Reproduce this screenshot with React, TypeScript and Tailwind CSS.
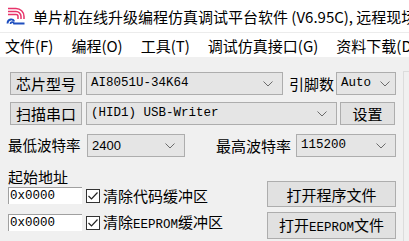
import React from "react";

const cjk = { fontFamily: '"Noto Sans CJK SC", "Microsoft YaHei", sans-serif' };
const mono = { fontFamily: '"Liberation Mono", "Noto Sans CJK SC", monospace' };

function Chevron() {
    return (
        <svg width="10" height="6" viewBox="0 0 10 6" className="shrink-0">
            <path d="M0.5 0.5 L5 5 L9.5 0.5" fill="none" stroke="#6b6b6b" strokeWidth="1" />
        </svg>
    );
}

function Combo({ text, width, font, size = "text-[12.5px]", arrowPad = "pr-[9px]" }: { text: string; width: string; font?: React.CSSProperties; size?: string; arrowPad?: string }) {
    return (
        <div className={`${width} h-[23px] shrink-0 flex items-center justify-between bg-[#e5e5e5] border border-[#adadad] pl-[4px] ${arrowPad}`}>
            <span className={`${size} leading-none text-black whitespace-nowrap`} style={font ?? mono}>{text}</span>
            <Chevron />
        </div>
    );
}

function Button({ children, width, height = "h-[23px]" }: { children: React.ReactNode; width: string; height?: string }) {
    return (
        <div className={`${width} ${height} shrink-0 flex items-center justify-center bg-[#e1e1e1] border border-[#adadad] text-black`}>
            <span className="text-[15px] leading-none whitespace-nowrap" style={cjk}>{children}</span>
        </div>
    );
}

function CheckBox() {
    return (
        <div className="w-[14px] h-[14px] shrink-0 bg-white border border-[#333333] flex items-center justify-center">
            <svg width="12" height="12" viewBox="0 0 12 12">
                <path d="M1.5 6 L4.5 9 L10.5 2.5" fill="none" stroke="#222" strokeWidth="1.2" />
            </svg>
        </div>
    );
}

function Logo() {
    return (
        <svg width="20" height="20" viewBox="0 0 20 20" className="shrink-0">
            <g fill="none" stroke="#e8336a" strokeWidth="1.5">
                <path d="M2 2.5 H10 A8 8 0 0 1 18 10.5 V13" />
                <path d="M2 5.5 H10 A5 5 0 0 1 15 10.5 V13" />
                <path d="M2 8.5 H10 A2 2 0 0 1 12 10.5 V13" />
            </g>
            <g fill="none" stroke="#1f4fbf" strokeWidth="1.8">
                <path d="M1.5 17.5 C1.5 12.5 8 12.5 8 15.5" />
                <path d="M4.5 18 C4.5 15.5 7.5 15.5 8 17.5 H18.5" />
            </g>
        </svg>
    );
}

function AddressInput() {
    return (
        <div className="w-[74px] h-[17px] shrink-0 bg-white border-t border-l border-[#a0a0a0] flex items-center pl-[1px]">
            <span className="text-[12.5px] leading-none text-black" style={mono}>0x0000</span>
        </div>
    );
}

export default function App() {
    const menu = ["文件(F)", "编程(O)", "工具(T)", "调试仿真接口(G)", "资料下载(D)"];

    return (
        <div className="w-[409px] h-[241px] overflow-hidden flex flex-col bg-[#f0f0f0]">
            {/* title bar */}
            <div className="h-[33px] shrink-0 bg-white flex items-center pl-[6px] gap-[7px] border-b border-[#ececec]">
                <Logo />
                <span className="text-[15px] leading-none text-black whitespace-nowrap" style={cjk}>
                    单片机在线升级编程仿真调试平台软件 (V6.95C), 远程现场
                </span>
            </div>

            {/* menu bar */}
            <div className="h-[24px] shrink-0 bg-white flex items-center pl-[5px] gap-[18px]">
                {menu.map((m) => (
                    <span key={m} className="text-[15px] leading-none text-black whitespace-nowrap" style={cjk}>{m}</span>
                ))}
            </div>

            {/* body */}
            <div className="flex-1 flex">
                <div className="flex-1 flex flex-col pl-[8px] pt-[15px]">
                    <div className="flex items-center pl-[2px]">
                        <Button width="w-[72px]">芯片型号</Button>
                        <div className="ml-[4px]"><Combo text="AI8051U-34K64" width="w-[197px]" /></div>
                        <span className="ml-[6px] text-[15px] leading-none text-black" style={cjk}>引脚数</span>
                        <div className="ml-[2px]"><Combo text="Auto" width="w-[60px]" arrowPad="pr-[5px]" /></div>
                    </div>

                    <div className="flex items-center pl-[2px] mt-[7px]">
                        <Button width="w-[72px]">扫描串口</Button>
                        <div className="ml-[4px]"><Combo text="(HID1) USB-Writer" width="w-[251px]" /></div>
                        <div className="ml-[3px]"><Button width="w-[55px]">设置</Button></div>
                    </div>

                    <div className="flex items-center mt-[9px]">
                        <span className="w-[79px] text-[14.5px] leading-none text-black" style={cjk}>最低波特率</span>
                        <Combo text="2400" width="w-[98px]" size="text-[13px]" font={{ fontFamily: '"Liberation Sans", Arial, sans-serif' }} />
                        <span className="ml-[31px] text-[15px] leading-none text-black" style={cjk}>最高波特率</span>
                        <div className="ml-[5px]"><Combo text="115200" width="w-[100px]" /></div>
                    </div>

                    <div className="flex mt-[10px]">
                        <div className="flex flex-col">
                            <span className="h-[19px] text-[15px] leading-[19px] text-black" style={cjk}>起始地址</span>
                            <div className="flex items-center mt-[1px]">
                                <AddressInput />
                                <div className="ml-[4px]"><CheckBox /></div>
                                <span className="ml-[3px] text-[15px] leading-none text-black whitespace-nowrap" style={cjk}>清除代码缓冲区</span>
                            </div>
                            <div className="flex items-center mt-[10px]">
                                <AddressInput />
                                <div className="ml-[4px]"><CheckBox /></div>
                                <span className="ml-[3px] text-[15px] leading-none text-black whitespace-nowrap" style={cjk}>
                                    清除<span className="text-[12.5px]" style={mono}>EEPROM</span>缓冲区
                                </span>
                            </div>
                        </div>
                        <div className="flex flex-col ml-auto mr-[1px] pt-[14px] gap-[5px]">
                            <Button width="w-[129px]" height="h-[26px]">打开程序文件</Button>
                            <Button width="w-[129px]" height="h-[27px]">
                                打开<span className="text-[12.5px]" style={mono}>EEPROM</span>文件
                            </Button>
                        </div>
                    </div>
                </div>
                <div className="w-[6px] ml-[6px] mt-[14px] border-l border-t border-[#dcdcdc]" />
            </div>
        </div>
    );
}
